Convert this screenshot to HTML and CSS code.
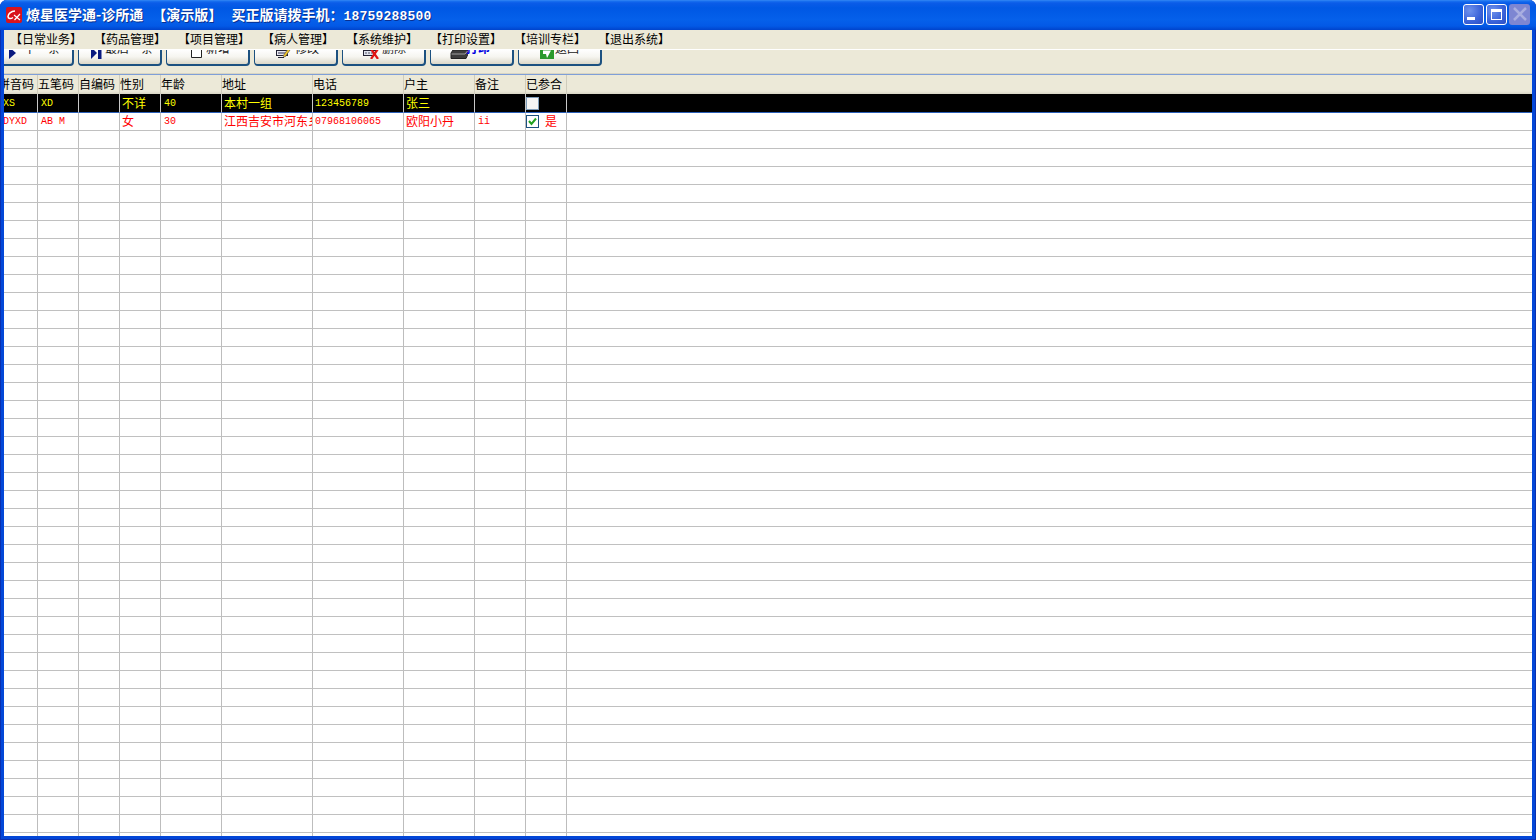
FILE: index.html
```html
<!DOCTYPE html>
<html lang="zh-CN">
<head>
    <meta charset="UTF-8">
    <title>燎星医学通-诊所通</title>
    <link rel="stylesheet" href="styles.css">
</head>
<body>
<div class="window">
    <div class="titlebar">
        <svg class="logo" width="16" height="16" viewBox="0 0 16 16">
            <rect width="16" height="16" rx="2" fill="#d8141c"/>
            <path d="M9 4 C5 4 2 7 2 9.5 C2 12 5 12 7 10.5" fill="none" stroke="#fff" stroke-width="1.5"/>
            <path d="M8 8 L14 13 M14 7 L8.500 13" fill="none" stroke="#fff" stroke-width="1.200"/>
        </svg>
        <span class="title-text">燎星医学通-诊所通 【演示版】 买正版请拨手机：<span class="phone">18759288500</span></span>
        <div class="win-btns">
            <div class="win-btn"><span class="min-glyph"></span></div>
            <div class="win-btn"><span class="max-glyph"></span></div>
            <div class="win-btn close">
                <svg width="16" height="16" viewBox="0 0 16 16"><path d="M2 2 L14 14 M14 2 L2 14" stroke="#a9aee0" stroke-width="2.500"/></svg>
            </div>
        </div>
    </div>

    <div class="menubar">
        <span class="menu-item">【日常业务】</span>
        <span class="menu-item">【药品管理】</span>
        <span class="menu-item">【项目管理】</span>
        <span class="menu-item">【病人管理】</span>
        <span class="menu-item">【系统维护】</span>
        <span class="menu-item">【打印设置】</span>
        <span class="menu-item">【培训专栏】</span>
        <span class="menu-item">【退出系统】</span>
    </div>

    <div class="toolbar">
        <div class="btn btn-next">
            <svg width="8" height="18" viewBox="0 0 8 18"><path d="M0 6 L7 12 L0 18 Z" fill="#0a1a80"/></svg>
            <span class="btn-label">下一条</span>
        </div>
        <div class="btn btn-last">
            <svg width="12" height="18" viewBox="0 0 12 18"><path d="M0 6 L6 12 L0 18 Z" fill="#0a1a80"/><rect x="7" y="6" width="3.500" height="12" fill="#0a1a80"/></svg>
            <span class="btn-label">最后一条</span>
        </div>
        <div class="btn btn-add">
            <svg width="14" height="18" viewBox="0 0 14 18"><path d="M1.500 6 V16.500 H11.500 V6" fill="#fff" stroke="#222" stroke-width="1"/></svg>
            <span class="btn-label">新增</span>
        </div>
        <div class="btn btn-edit">
            <svg width="18" height="18" viewBox="0 0 18 18">
                <rect x="0.500" y="9.500" width="11" height="5" fill="#e8e8f0" stroke="#223" stroke-width="1"/>
                <path d="M2 12 H9" stroke="#335" stroke-width="1"/>
                <path d="M7 15 L12 8 L14 9 L9 16 Z" fill="#f0c828" stroke="#654" stroke-width="0.700"/>
                <path d="M2 16.500 H8" stroke="#223" stroke-width="1"/>
            </svg>
            <span class="btn-label">修改</span>
        </div>
        <div class="btn btn-del">
            <svg width="18" height="18" viewBox="0 0 18 18">
                <rect x="0.500" y="9.500" width="12" height="5" fill="#dfe3ee" stroke="#223" stroke-width="1"/>
                <path d="M2 12 H10" stroke="#556" stroke-width="1" stroke-dasharray="2 1"/>
                <path d="M8 8 L15 18 M15 8 L8 18" stroke="#e01414" stroke-width="2.200"/>
            </svg>
            <span class="btn-label">删除</span>
        </div>
        <div class="btn btn-print">
            <svg width="18" height="18" viewBox="0 0 18 18">
                <path d="M3 9 H18 V13 L16 17.500 H1 V12 Z" fill="#3c3c3c" stroke="#222" stroke-width="1"/>
                <path d="M1.500 13 H15 L17.500 10" fill="none" stroke="#a0a0a0" stroke-width="1"/>
            </svg>
            <span class="btn-label">打印</span>
        </div>
        <div class="btn btn-back">
            <svg width="15" height="18" viewBox="0 0 15 18">
                <rect y="7" width="14" height="11" fill="#2a9a2c"/>
                <path d="M3 9.500 H11 L7 17 L6 13 H3 Z" fill="#fff"/>
            </svg>
            <span class="btn-label">返回</span>
        </div>
    </div>

    <div class="grid-wrap">
        <table class="grid">
            <colgroup>
                <col class="w34"><col class="w41"><col class="w41"><col class="w41"><col class="w61">
                <col class="w91"><col class="w91"><col class="w71"><col class="w51"><col class="w41"><col>
            </colgroup>
            <thead>
                <tr><th class="first">拼音码</th><th>五笔码</th><th>自编码</th><th>性别</th><th>年龄</th><th>地址</th><th>电话</th><th>户主</th><th>备注</th><th>已参合</th><th class="filler"></th></tr>
            </thead>
            <tbody>
                <tr class="selected"><td class="first latin">XS</td><td class="latin">XD</td><td></td><td>不详</td><td class="latin">40</td><td>本村一组</td><td class="latin phone-cell">123456789</td><td>张三</td><td class="latin"></td><td><span class="check"></span></td><td></td></tr>
                <tr class="red"><td class="first latin">DYXD</td><td class="latin">AB M</td><td></td><td>女</td><td class="latin">30</td><td>江西吉安市河东乡</td><td class="latin phone-cell">07968106065</td><td>欧阳小丹</td><td class="latin">ii</td><td><span class="check checked"><svg width="11" height="11" viewBox="0 0 11 11"><path d="M2 5 L4.500 8 L9 2.500" fill="none" stroke="#21a121" stroke-width="2"/></svg></span><span class="check-text">是</span></td><td></td></tr>
                <tr><td></td><td></td><td></td><td></td><td></td><td></td><td></td><td></td><td></td><td></td><td></td></tr>
                <tr><td></td><td></td><td></td><td></td><td></td><td></td><td></td><td></td><td></td><td></td><td></td></tr>
                <tr><td></td><td></td><td></td><td></td><td></td><td></td><td></td><td></td><td></td><td></td><td></td></tr>
                <tr><td></td><td></td><td></td><td></td><td></td><td></td><td></td><td></td><td></td><td></td><td></td></tr>
                <tr><td></td><td></td><td></td><td></td><td></td><td></td><td></td><td></td><td></td><td></td><td></td></tr>
                <tr><td></td><td></td><td></td><td></td><td></td><td></td><td></td><td></td><td></td><td></td><td></td></tr>
                <tr><td></td><td></td><td></td><td></td><td></td><td></td><td></td><td></td><td></td><td></td><td></td></tr>
                <tr><td></td><td></td><td></td><td></td><td></td><td></td><td></td><td></td><td></td><td></td><td></td></tr>
                <tr><td></td><td></td><td></td><td></td><td></td><td></td><td></td><td></td><td></td><td></td><td></td></tr>
                <tr><td></td><td></td><td></td><td></td><td></td><td></td><td></td><td></td><td></td><td></td><td></td></tr>
                <tr><td></td><td></td><td></td><td></td><td></td><td></td><td></td><td></td><td></td><td></td><td></td></tr>
                <tr><td></td><td></td><td></td><td></td><td></td><td></td><td></td><td></td><td></td><td></td><td></td></tr>
                <tr><td></td><td></td><td></td><td></td><td></td><td></td><td></td><td></td><td></td><td></td><td></td></tr>
                <tr><td></td><td></td><td></td><td></td><td></td><td></td><td></td><td></td><td></td><td></td><td></td></tr>
                <tr><td></td><td></td><td></td><td></td><td></td><td></td><td></td><td></td><td></td><td></td><td></td></tr>
                <tr><td></td><td></td><td></td><td></td><td></td><td></td><td></td><td></td><td></td><td></td><td></td></tr>
                <tr><td></td><td></td><td></td><td></td><td></td><td></td><td></td><td></td><td></td><td></td><td></td></tr>
                <tr><td></td><td></td><td></td><td></td><td></td><td></td><td></td><td></td><td></td><td></td><td></td></tr>
                <tr><td></td><td></td><td></td><td></td><td></td><td></td><td></td><td></td><td></td><td></td><td></td></tr>
                <tr><td></td><td></td><td></td><td></td><td></td><td></td><td></td><td></td><td></td><td></td><td></td></tr>
                <tr><td></td><td></td><td></td><td></td><td></td><td></td><td></td><td></td><td></td><td></td><td></td></tr>
                <tr><td></td><td></td><td></td><td></td><td></td><td></td><td></td><td></td><td></td><td></td><td></td></tr>
                <tr><td></td><td></td><td></td><td></td><td></td><td></td><td></td><td></td><td></td><td></td><td></td></tr>
                <tr><td></td><td></td><td></td><td></td><td></td><td></td><td></td><td></td><td></td><td></td><td></td></tr>
                <tr><td></td><td></td><td></td><td></td><td></td><td></td><td></td><td></td><td></td><td></td><td></td></tr>
                <tr><td></td><td></td><td></td><td></td><td></td><td></td><td></td><td></td><td></td><td></td><td></td></tr>
                <tr><td></td><td></td><td></td><td></td><td></td><td></td><td></td><td></td><td></td><td></td><td></td></tr>
                <tr><td></td><td></td><td></td><td></td><td></td><td></td><td></td><td></td><td></td><td></td><td></td></tr>
                <tr><td></td><td></td><td></td><td></td><td></td><td></td><td></td><td></td><td></td><td></td><td></td></tr>
                <tr><td></td><td></td><td></td><td></td><td></td><td></td><td></td><td></td><td></td><td></td><td></td></tr>
                <tr><td></td><td></td><td></td><td></td><td></td><td></td><td></td><td></td><td></td><td></td><td></td></tr>
                <tr><td></td><td></td><td></td><td></td><td></td><td></td><td></td><td></td><td></td><td></td><td></td></tr>
                <tr><td></td><td></td><td></td><td></td><td></td><td></td><td></td><td></td><td></td><td></td><td></td></tr>
                <tr><td></td><td></td><td></td><td></td><td></td><td></td><td></td><td></td><td></td><td></td><td></td></tr>
                <tr><td></td><td></td><td></td><td></td><td></td><td></td><td></td><td></td><td></td><td></td><td></td></tr>
                <tr><td></td><td></td><td></td><td></td><td></td><td></td><td></td><td></td><td></td><td></td><td></td></tr>
                <tr><td></td><td></td><td></td><td></td><td></td><td></td><td></td><td></td><td></td><td></td><td></td></tr>
                <tr><td></td><td></td><td></td><td></td><td></td><td></td><td></td><td></td><td></td><td></td><td></td></tr>
                <tr><td></td><td></td><td></td><td></td><td></td><td></td><td></td><td></td><td></td><td></td><td></td></tr>
                <tr><td></td><td></td><td></td><td></td><td></td><td></td><td></td><td></td><td></td><td></td><td></td></tr>
            </tbody>
        </table>
    </div>
</div>
</body>
</html>
```

FILE: styles.css
```css
* {
    box-sizing: border-box;
}
html, body {
    margin: 0;
    height: 100%;
    background: #fff;
    overflow: hidden;
}
body {
    font-family: "Noto Sans CJK SC", "Liberation Sans", sans-serif;
    font-size: 12px;
    color: #000;
}
.window {
    height: 840px;
    display: flex;
    flex-direction: column;
    background: #0347d8;
    border-radius: 7px 7px 0 0;
    padding: 0 4px 4px;
    overflow: hidden;
    box-shadow: inset 1px 0 0 #0a2fb0, inset -1px 0 0 #0a2fb0, inset 0 -1px 0 #0a2fb0;
}

/* title */
.titlebar {
    height: 30px;
    flex: none;
    margin: 0 -4px;
    padding: 0 6px 0 6px;
    display: flex;
    align-items: center;
    background: linear-gradient(#3a8cf4 0, #1a72f0 1px, #0b5ce8 3px, #0058e4 8px, #0560ea 20px, #0359e6 26px, #0043cc 30px);
}
.logo {
    flex: none;
    margin-right: 4px;
}
.title-text {
    color: #fff;
    font-size: 14px;
    font-weight: bold;
    line-height: 20px;
    white-space: pre;
    word-spacing: 6px;
    text-shadow: 1px 1px 0 #0a2f90;
}
.phone {
    font-family: "Liberation Mono", monospace;
    font-size: 13px;
    letter-spacing: 0.2px;
}
.win-btns {
    margin-left: auto;
    display: flex;
    gap: 2px;
    padding-bottom: 2px;
}
.win-btn {
    width: 21px;
    height: 21px;
    border: 1px solid #fff;
    border-radius: 3px;
    background: radial-gradient(circle at 30% 30%, #6f92ec, #3a62d8 60%, #2a4fc4);
    display: flex;
    align-items: center;
    justify-content: center;
}
.win-btn.close {
    border: none;
    background: #7d86d2;
}
.min-glyph {
    display: block;
    width: 8px;
    height: 3px;
    background: #fff;
    margin: 8px 5px 0 0;
}
.max-glyph {
    display: block;
    width: 11px;
    height: 11px;
    border: 1px solid #fff;
    border-top-width: 3px;
}

/* menu */
.menubar {
    height: 19px;
    flex: none;
    display: flex;
    align-items: flex-start;
    gap: 12px;
    padding-left: 6px;
    background: #ece9d8;
    position: relative;
    z-index: 1;
}
.menu-item {
    width: 72px;
    line-height: 18px;
    white-space: nowrap;
}

/* toolbar, buttons are cut off at the top */
.toolbar {
    height: 26px;
    flex: none;
    display: flex;
    gap: 4px;
    overflow: hidden;
    background: #ece9d8;
    border-top: 1px solid #fff;
    border-bottom: 1px solid #7f9fd8;
    box-shadow: inset 0 -1px 0 #d8d5c4;
}
.btn {
    flex: none;
    width: 84px;
    height: 32px;
    margin-top: -16px;
    display: flex;
    align-items: center;
    border: 1px solid #1c5180;
    border-width: 1px 2px 2px 1px;
    border-radius: 4px;
    background: linear-gradient(#fff 50%, #f6f5f0 75%, #dcd8c8);
}
.btn svg {
    flex: none;
    margin-top: 1px;
}
.btn-next { margin-left: -14px; padding-left: 18px; gap: 7px; }
.btn-last { padding-left: 12px; gap: 2px; }
.btn-add { padding-left: 23px; gap: 2px; }
.btn-edit { padding-left: 21px; gap: 1px; }
.btn-del { padding-left: 20px; gap: 1px; }
.btn-print { padding-left: 19px; gap: 0; }
.btn-print svg { margin-right: -2px; }
.btn-back { padding-left: 21px; gap: 0; }
.btn-label {
    margin-top: -4px;
    white-space: nowrap;
    color: #222;
}
.btn-print .btn-label {
    color: #0000e0;
    font-weight: bold;
}

/* grid */
.grid-wrap {
    flex: 1;
    min-height: 0;
    overflow: hidden;
    background: #fff;
}
.grid {
    width: 100%;
    table-layout: fixed;
    border-collapse: separate;
    border-spacing: 0;
}
.w34 { width: 34px; }
.w41 { width: 41px; }
.w51 { width: 51px; }
.w61 { width: 61px; }
.w71 { width: 71px; }
.w91 { width: 91px; }
.grid th {
    height: 19px;
    padding: 0 0 2px 0;
    font-weight: normal;
    text-align: left;
    line-height: 17px;
    white-space: nowrap;
    overflow: hidden;
    background: linear-gradient(#ece9d8 85%, #d9d6c6);
    border-right: 1px solid #cfccbc;
}
.grid th.filler {
    border-right: none;
}
.grid td {
    height: 18px;
    padding: 0 0 0 2px;
    line-height: 16px;
    white-space: nowrap;
    overflow: hidden;
    border-right: 1px solid #bdbdbd;
    border-bottom: 1px solid #c0c0c0;
}
.grid td:last-child {
    border-right: none;
}
.grid .first {
    padding-left: 0;
    text-indent: -6px;
}
.grid td.latin {
    font-family: "Liberation Mono", monospace;
    font-size: 10px;
    padding-left: 3px;
}
.grid td.first.latin {
    padding-left: 0;
    text-indent: -1px;
}
.grid td.phone-cell {
    padding-left: 2px;
}
.selected td {
    height: 19px;
    background: #000;
    color: #ff0;
    border-bottom-color: #2a5fb8;
    border-right-color: #c8c8c8;
}
.grid .selected td {
    padding-bottom: 1px;
}
.grid .selected td.latin {
    padding-top: 2px;
    padding-bottom: 0;
}
.red td {
    color: #f00;
    padding-bottom: 1px;
}
.grid .red td.latin {
    padding-bottom: 0;
}
.check {
    display: inline-block;
    width: 13px;
    height: 13px;
    margin-left: -2px;
    vertical-align: -2px;
    background: #f4f4f4;
    border: 1px solid #7f9db9;
}
.check.checked {
    background: #fff;
    border-color: #1c5180;
}
.check svg {
    display: block;
}
.check-text {
    margin-left: 6px;
}
```
